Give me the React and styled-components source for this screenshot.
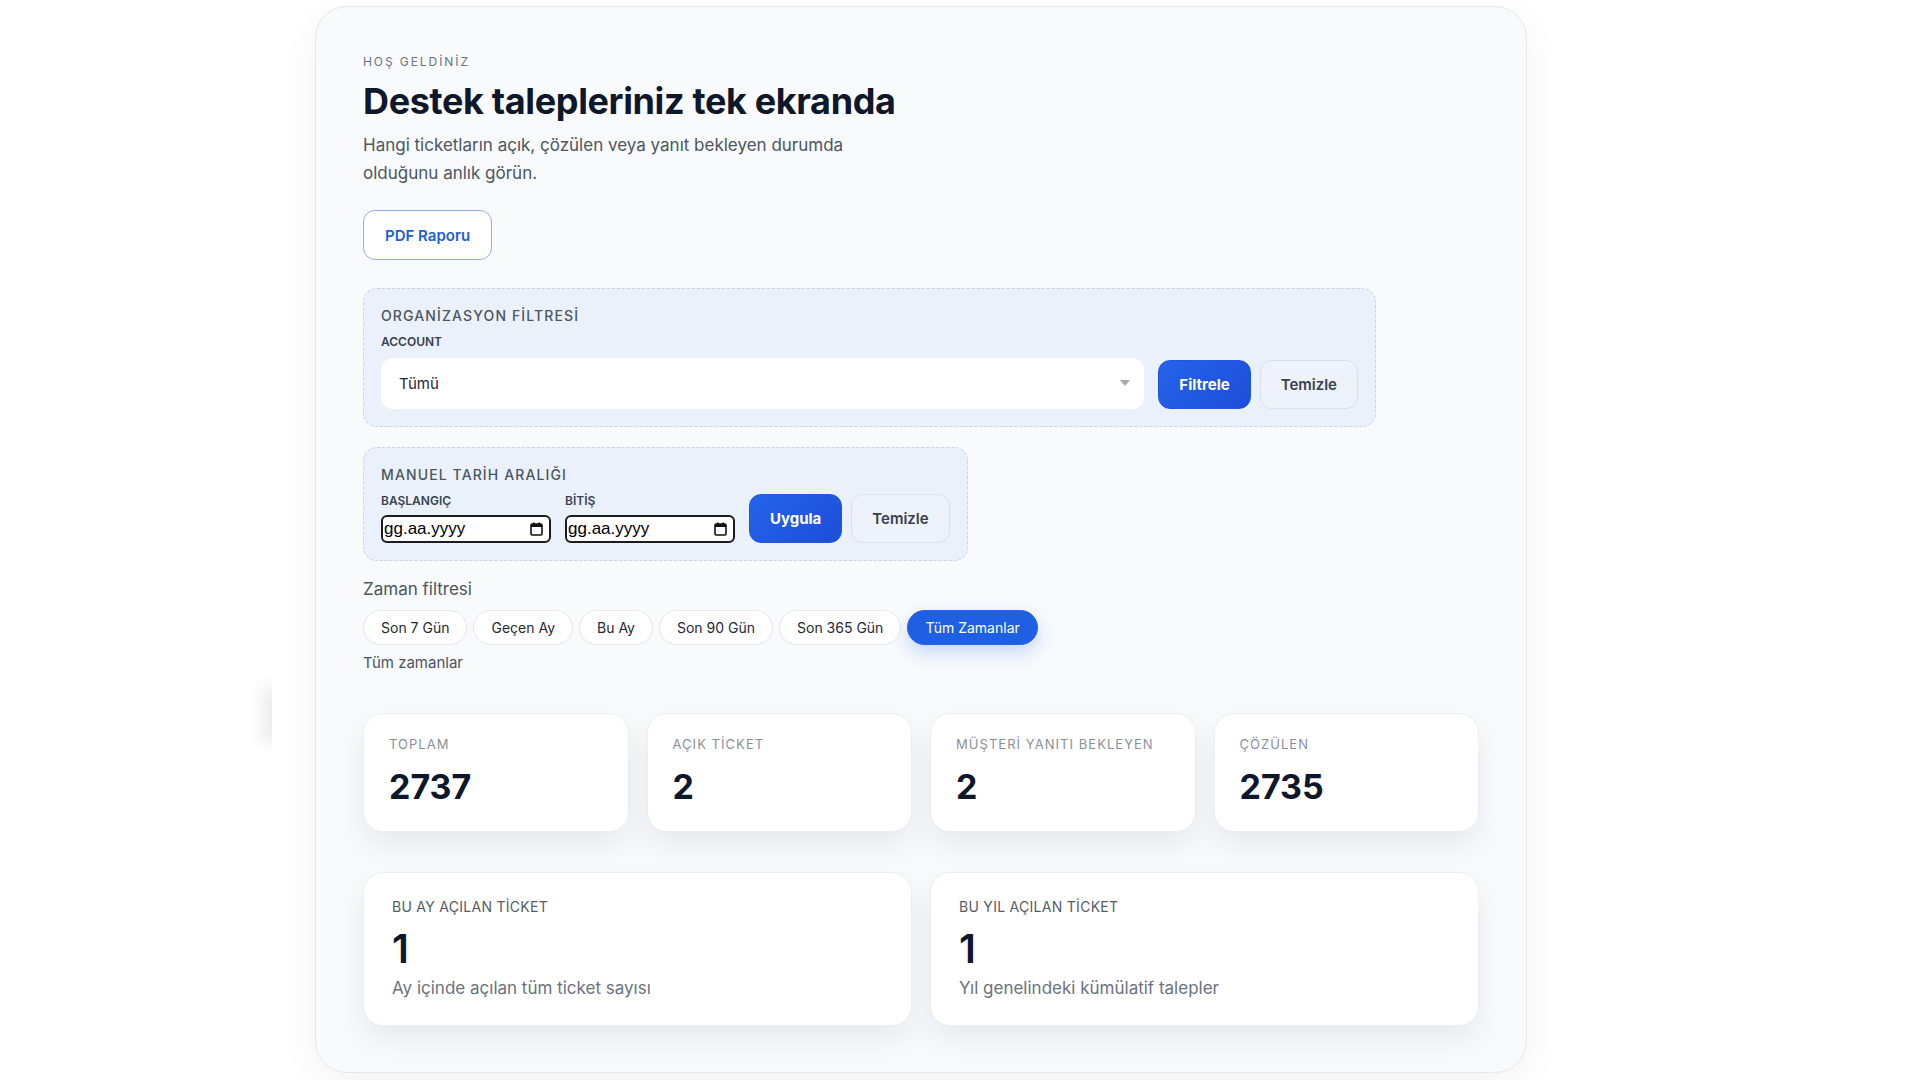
import styled, { createGlobalStyle } from "styled-components";

const GlobalStyle = createGlobalStyle`
  * {
    box-sizing: border-box;
  }
  body {
    margin: 0;
    background: #ffffff;
    font-family: Inter, "Noto Sans", sans-serif;
    color: #0f172a;
  }
`;

const Page = styled.div`
  position: relative;
  min-height: 1080px;
  padding: 6px 0 7px 315px;
`;

const EdgeShade = styled.div`
  position: absolute;
  left: 250px;
  top: 674px;
  width: 22px;
  height: 78px;
  background: linear-gradient(to right, rgba(0, 0, 0, 0), rgba(0, 0, 0, 0.07));
  mask-image: linear-gradient(to bottom, transparent, #000 35%, #000 75%, transparent);
`;

const Shell = styled.main`
  width: 1212px;
  background: #f8fafc;
  border: 1px solid #e3e7ee;
  border-radius: 32px;
  box-shadow: 0 12px 40px rgba(15, 23, 42, 0.05);
  padding: 46px 47px 46px;
`;

const Eyebrow = styled.div`
  font-size: 12px;
  line-height: 18px;
  letter-spacing: 0.16em;
  color: #6b7280;
  margin-bottom: 9px;
`;

const Title = styled.h1`
  margin: 0 0 8px;
  font-size: 36px;
  line-height: 43px;
  font-weight: 700;
  letter-spacing: -0.01em;
  color: #0f172a;
`;

const Lead = styled.p`
  margin: 0 0 23px;
  max-width: 520px;
  font-size: 17px;
  line-height: 28px;
  color: #4b5563;
`;

const OutlineButton = styled.button`
  height: 50px;
  padding: 0 21px;
  border: 1px solid #8fb0ec;
  border-radius: 12px;
  background: #ffffff;
  color: #1d5fd6;
  font-family: inherit;
  font-size: 15px;
  font-weight: 600;
`;

const FilterBox = styled.section`
  width: ${(p) => (p.$fit ? "fit-content" : "1013px")};
  margin-top: ${(p) => p.$top}px;
  background: #ebf1fb;
  border: 1px dashed #c6d3ea;
  border-radius: 14px;
  padding: 17px;
`;

const BoxTitle = styled.div`
  font-size: 14px;
  line-height: 19px;
  letter-spacing: 0.08em;
  font-weight: 500;
  color: #4b5563;
  margin-bottom: 9px;
`;

const Row = styled.div`
  display: flex;
  align-items: flex-end;
  gap: 14px;
`;

const Field = styled.div`
  display: flex;
  flex-direction: column;
  flex: ${(p) => (p.$grow ? 1 : "none")};
`;

const FieldLabel = styled.label`
  font-size: 12px;
  line-height: 16px;
  font-weight: 600;
  color: #374151;
  margin-bottom: ${(p) => p.$gap}px;
`;

const Select = styled.div`
  height: 51px;
  display: flex;
  align-items: center;
  justify-content: space-between;
  padding: 0 14px 0 18px;
  background: #ffffff;
  border-radius: 12px;
  font-size: 15px;
  color: #1f2937;
`;

const Caret = styled.span`
  width: 0;
  height: 0;
  border-left: 5px solid transparent;
  border-right: 5px solid transparent;
  border-top: 6px solid #a3a8b1;
  margin-top: -2px;
`;

const ButtonGroup = styled.div`
  display: flex;
  gap: 9px;
`;

const Button = styled.button`
  height: 49px;
  padding: 0 20px;
  border-radius: 12px;
  font-family: inherit;
  font-size: 15px;
  font-weight: ${(p) => (p.$primary ? 700 : 600)};
  color: ${(p) => (p.$primary ? "#ffffff" : "#374151")};
  background: ${(p) =>
    p.$primary ? "linear-gradient(135deg, #2563eb, #1d4ed8)" : "#eef2fa"};
  border: 1px solid ${(p) => (p.$primary ? "#1f57e0" : "#d9e0ec")};
`;

const DateInput = styled.div`
  width: 170px;
  height: 28px;
  display: flex;
  align-items: center;
  justify-content: space-between;
  padding: 0 6px 0 1px;
  background: #ffffff;
  border: 2px solid #1c1c1c;
  border-radius: 6px;
  font-family: "Liberation Sans", Arial, sans-serif;
  font-size: 17px;
  color: #000000;
`;

const SectionLabel = styled.div`
  margin-top: 16px;
  font-size: 17px;
  line-height: 24px;
  color: #4b5563;
`;

const Pills = styled.div`
  display: flex;
  gap: 6px;
  margin-top: 9px;
`;

const Pill = styled.button`
  height: 35px;
  padding: 0 17px;
  border-radius: 999px;
  font-family: inherit;
  font-size: 14px;
  border: 1px solid ${(p) => (p.$active ? "#2563eb" : "#e2e8f0")};
  background: ${(p) => (p.$active ? "#1f5fe3" : "#ffffff")};
  color: ${(p) => (p.$active ? "#ffffff" : "#1f2937")};
  box-shadow: ${(p) => (p.$active ? "0 8px 18px rgba(37, 99, 235, 0.22)" : "none")};
`;

const Hint = styled.div`
  margin-top: 8px;
  font-size: 15px;
  line-height: 20px;
  color: #4b5563;
`;

const StatGrid = styled.div`
  display: grid;
  grid-template-columns: repeat(4, 1fr);
  column-gap: 18px;
  row-gap: 40px;
  margin-top: 40px;
`;

const StatCard = styled.div`
  grid-column: span ${(p) => p.$span || 1};
  background: #ffffff;
  border: 1px solid #eceef2;
  border-radius: 20px;
  box-shadow: 0 14px 30px rgba(15, 23, 42, 0.07);
  padding: ${(p) => (p.$wide ? "25px 28px 25px" : "21px 25px 24px")};
`;

const StatLabel = styled.div`
  font-size: ${(p) => (p.$wide ? 14 : 13)}px;
  line-height: 18px;
  letter-spacing: ${(p) => (p.$wide ? "0.02em" : "0.08em")};
  color: ${(p) => (p.$wide ? "#555c68" : "#8a9099")};
`;

const StatValue = styled.div`
  margin-top: ${(p) => (p.$wide ? 9 : 14)}px;
  font-size: ${(p) => (p.$wide ? 40 : 34)}px;
  line-height: ${(p) => (p.$wide ? 48 : 40)}px;
  font-weight: ${(p) => (p.$wide ? 600 : 700)};
  color: #0f172a;
`;

const StatNote = styled.div`
  margin-top: 3px;
  font-size: 17px;
  line-height: 24px;
  color: #6b7280;
`;

function CalendarIcon() {
  return (
    <svg width="13" height="14" viewBox="0 0 13 14" fill="none">
      <rect x="1" y="2" width="11" height="11" rx="1.2" stroke="#111" strokeWidth="1.6" />
      <rect x="1" y="2" width="11" height="3" fill="#111" />
      <rect x="3" y="0.5" width="1.6" height="2.5" fill="#111" />
      <rect x="8.4" y="0.5" width="1.6" height="2.5" fill="#111" />
    </svg>
  );
}

const ranges = ["Son 7 Gün", "Geçen Ay", "Bu Ay", "Son 90 Gün", "Son 365 Gün", "Tüm Zamanlar"];

const stats = [
  { label: "TOPLAM", value: "2737" },
  { label: "AÇIK TİCKET", value: "2" },
  { label: "MÜŞTERİ YANITI BEKLEYEN", value: "2" },
  { label: "ÇÖZÜLEN", value: "2735" },
];

const totals = [
  { label: "BU AY AÇILAN TİCKET", value: "1", note: "Ay içinde açılan tüm ticket sayısı" },
  { label: "BU YIL AÇILAN TİCKET", value: "1", note: "Yıl genelindeki kümülatif talepler" },
];

export default function App() {
  return (
    <Page>
      <GlobalStyle />
      <EdgeShade />
      <Shell>
        <Eyebrow>HOŞ GELDİNİZ</Eyebrow>
        <Title>Destek talepleriniz tek ekranda</Title>
        <Lead>
          Hangi ticketların açık, çözülen veya yanıt bekleyen durumda olduğunu anlık görün.
        </Lead>
        <OutlineButton>PDF Raporu</OutlineButton>

        <FilterBox $top={28}>
          <BoxTitle>ORGANİZASYON FİLTRESİ</BoxTitle>
          <Row>
            <Field $grow>
              <FieldLabel $gap={8}>ACCOUNT</FieldLabel>
              <Select>
                Tümü
                <Caret />
              </Select>
            </Field>
            <ButtonGroup>
              <Button $primary>Filtrele</Button>
              <Button>Temizle</Button>
            </ButtonGroup>
          </Row>
        </FilterBox>

        <FilterBox $fit $top={20}>
          <BoxTitle>MANUEL TARİH ARALIĞI</BoxTitle>
          <Row>
            <Field>
              <FieldLabel $gap={6}>BAŞLANGIÇ</FieldLabel>
              <DateInput>
                gg.aa.yyyy
                <CalendarIcon />
              </DateInput>
            </Field>
            <Field>
              <FieldLabel $gap={6}>BİTİŞ</FieldLabel>
              <DateInput>
                gg.aa.yyyy
                <CalendarIcon />
              </DateInput>
            </Field>
            <ButtonGroup>
              <Button $primary>Uygula</Button>
              <Button>Temizle</Button>
            </ButtonGroup>
          </Row>
        </FilterBox>

        <SectionLabel>Zaman filtresi</SectionLabel>
        <Pills>
          {ranges.map((r) => (
            <Pill key={r} $active={r === "Tüm Zamanlar"}>
              {r}
            </Pill>
          ))}
        </Pills>
        <Hint>Tüm zamanlar</Hint>

        <StatGrid>
          {stats.map((s) => (
            <StatCard key={s.label}>
              <StatLabel>{s.label}</StatLabel>
              <StatValue>{s.value}</StatValue>
            </StatCard>
          ))}
          {totals.map((t) => (
            <StatCard key={t.label} $span={2} $wide>
              <StatLabel $wide>{t.label}</StatLabel>
              <StatValue $wide>{t.value}</StatValue>
              <StatNote>{t.note}</StatNote>
            </StatCard>
          ))}
        </StatGrid>
      </Shell>
    </Page>
  );
}
